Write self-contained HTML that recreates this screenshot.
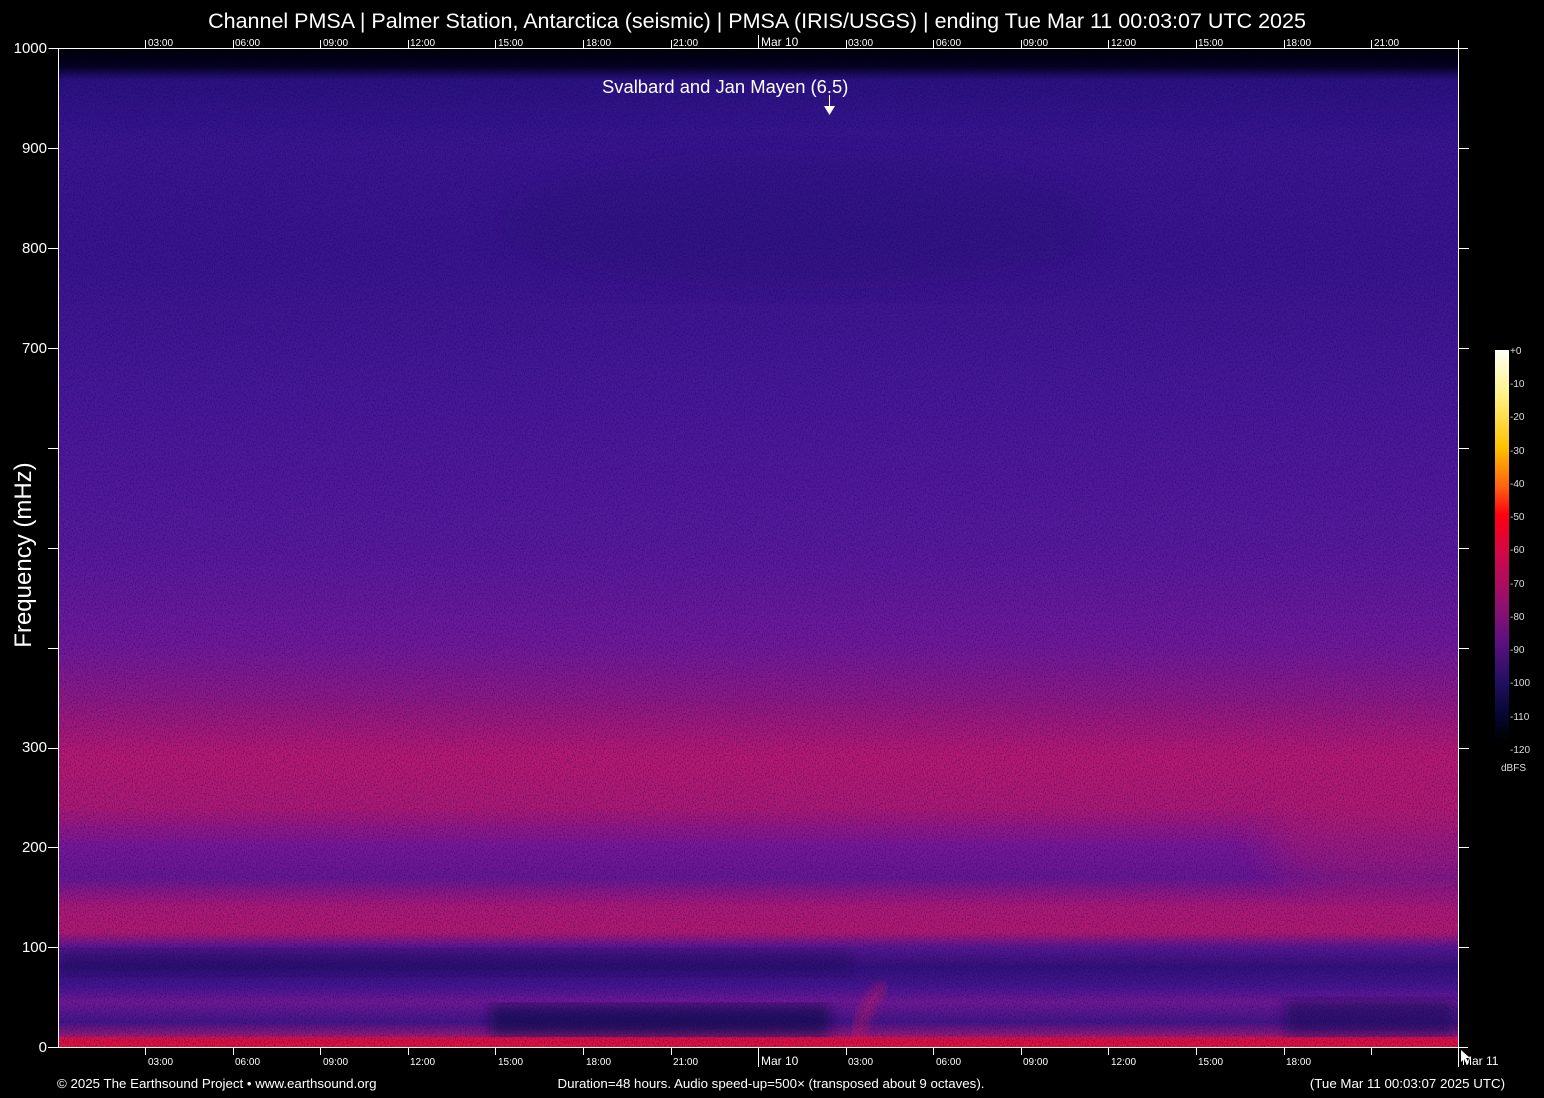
<!DOCTYPE html>
<html><head><meta charset="utf-8"><style>
html,body{margin:0;padding:0;background:#000;}
svg{display:block;font-family:"Liberation Sans",Arial,sans-serif;}
</style></head><body>
<svg width="1544" height="1098" viewBox="0 0 1544 1098" xmlns="http://www.w3.org/2000/svg">
<defs>
<linearGradient id="v" x1="0" y1="48" x2="0" y2="1047" gradientUnits="userSpaceOnUse">
<stop offset="0" stop-color="#000"/>
<stop offset="0.018" stop-color="#04021a"/>
<stop offset="0.032" stop-color="#2c1280"/>
<stop offset="0.1" stop-color="#3c1690"/>
<stop offset="0.2" stop-color="#3a158c"/>
<stop offset="0.35" stop-color="#4a1898"/>
<stop offset="0.5" stop-color="#5a1a9c"/>
<stop offset="0.6" stop-color="#741a98"/>
<stop offset="0.66" stop-color="#961a80"/>
<stop offset="0.71" stop-color="#bc1a70"/>
<stop offset="0.76" stop-color="#b01a74"/>
<stop offset="0.8" stop-color="#7a1896"/>
<stop offset="0.83" stop-color="#6a1894"/>
<stop offset="0.86" stop-color="#b01a74"/>
<stop offset="0.885" stop-color="#b41a70"/>
<stop offset="0.9" stop-color="#5c1890"/>
<stop offset="0.92" stop-color="#34127a"/>
<stop offset="0.94" stop-color="#481690"/>
<stop offset="0.955" stop-color="#721a94"/>
<stop offset="0.975" stop-color="#461688"/>
<stop offset="0.99" stop-color="#a01a78"/>
<stop offset="1" stop-color="#e41240"/>
</linearGradient>
<linearGradient id="cb" x1="0" y1="0" x2="0" y2="1">
<stop offset="0" stop-color="#fffff8"/>
<stop offset="0.12" stop-color="#fff080"/>
<stop offset="0.25" stop-color="#ffc000"/>
<stop offset="0.35" stop-color="#ff6010"/>
<stop offset="0.42" stop-color="#ff0010"/>
<stop offset="0.52" stop-color="#d00848"/>
<stop offset="0.65" stop-color="#901070"/>
<stop offset="0.75" stop-color="#5a1080"/>
<stop offset="0.85" stop-color="#201060"/>
<stop offset="0.93" stop-color="#060630"/>
<stop offset="1" stop-color="#000"/>
</linearGradient>
<filter id="n" x="0" y="0" width="100%" height="100%">
<feTurbulence type="fractalNoise" baseFrequency="0.9 0.6" numOctaves="2" seed="3"/>
<feColorMatrix type="matrix" values="0 0 0 0 0  0 0 0 0 0  0 0 0 0 0.1  2.2 0 0 0 -0.95"/>
</filter>
<filter id="b"><feGaussianBlur stdDeviation="6"/></filter>
<filter id="b2"><feGaussianBlur stdDeviation="20"/></filter>
<clipPath id="pc"><rect x="59" y="49" width="1399" height="998"/></clipPath>
</defs>
<g clip-path="url(#pc)">
<rect x="59" y="49" width="1399" height="998" fill="url(#v)"/>
<ellipse cx="1400" cy="840" rx="140" ry="50" fill="#c01a68" opacity="0.5" filter="url(#b2)"/>
<ellipse cx="800" cy="220" rx="300" ry="70" fill="#1a0a60" opacity="0.2" filter="url(#b2)"/>
<rect x="490" y="1005" width="340" height="30" fill="#180a50" opacity="0.75" filter="url(#b)"/>
<rect x="1285" y="1000" width="170" height="35" fill="#200c5c" opacity="0.65" filter="url(#b)"/>
<rect x="60" y="950" width="790" height="25" fill="#200c5c" opacity="0.4" filter="url(#b)"/>
<path d="M855 1045 Q865 1000 885 985" stroke="#e01a58" stroke-width="8" fill="none" opacity="0.7" filter="url(#b)"/>
<rect x="59" y="1037" width="1399" height="10" fill="#f01030" opacity="0.7"/>
<rect x="59" y="49" width="1399" height="998" filter="url(#n)" opacity="0.5"/>
</g>
<g stroke="#fff" stroke-width="1" fill="none">
<path d="M48.5 48.5H1468M58.5 48.5V1047.5M1458.5 40V1047.5M48 1047.5H1468"/>
<path d="M48 148.5h10M48 248.5h10M48 348.5h10M48 448.5h10M48 548.5h10M48 648.5h10M48 748.5h10M48 847.5h10M48 947.5h10"/>
<path d="M1459 148.5h10M1459 248.5h10M1459 348.5h10M1459 448.5h10M1459 548.5h10M1459 648.5h10M1459 748.5h10M1459 847.5h10M1459 947.5h10"/>
<path d="M145.5 40V48M233.5 40V48M320.5 40V48M408.5 40V48M495.5 40V48M583.5 40V48M671.5 40V48M758.5 35V48M846.5 40V48M933.5 40V48M1021.5 40V48M1108.5 40V48M1196.5 40V48M1284.5 40V48M1371.5 40V48"/>
<path d="M145.5 1047V1055M233.5 1047V1055M320.5 1047V1055M408.5 1047V1055M495.5 1047V1055M583.5 1047V1055M671.5 1047V1055M758.5 1047V1067M846.5 1047V1055M933.5 1047V1055M1021.5 1047V1055M1108.5 1047V1055M1196.5 1047V1055M1284.5 1047V1055M1371.5 1047V1055M1458.5 1047V1067"/>
</g>
<g fill="#fff" font-size="10">
<text x="148" y="46">03:00</text><text x="235" y="46">06:00</text><text x="323" y="46">09:00</text><text x="410" y="46">12:00</text><text x="498" y="46">15:00</text><text x="586" y="46">18:00</text><text x="673" y="46">21:00</text><text x="848" y="46">03:00</text><text x="936" y="46">06:00</text><text x="1023" y="46">09:00</text><text x="1111" y="46">12:00</text><text x="1198" y="46">15:00</text><text x="1286" y="46">18:00</text><text x="1374" y="46">21:00</text>
<text x="148" y="1065">03:00</text><text x="235" y="1065">06:00</text><text x="323" y="1065">09:00</text><text x="410" y="1065">12:00</text><text x="498" y="1065">15:00</text><text x="586" y="1065">18:00</text><text x="673" y="1065">21:00</text><text x="848" y="1065">03:00</text><text x="936" y="1065">06:00</text><text x="1023" y="1065">09:00</text><text x="1111" y="1065">12:00</text><text x="1198" y="1065">15:00</text><text x="1286" y="1065">18:00</text>
</g>
<g fill="#fff" font-size="12">
<text x="761" y="46">Mar 10</text><text x="761" y="1065">Mar 10</text><text x="1462" y="1065">Mar 11</text>
</g>
<g fill="#fff" font-size="15" text-anchor="end">
<text x="47" y="53">1000</text><text x="47" y="153">900</text><text x="47" y="253">800</text><text x="47" y="353">700</text><text x="47" y="752">300</text><text x="47" y="852">200</text><text x="47" y="952">100</text><text x="47" y="1052">0</text>
</g>
<text x="757" y="28" fill="#fff" font-size="21.5" text-anchor="middle">Channel PMSA | Palmer Station, Antarctica (seismic) | PMSA (IRIS/USGS) | ending Tue Mar 11 00:03:07 UTC 2025</text>
<text transform="translate(31 555) rotate(-90)" fill="#fff" font-size="24" text-anchor="middle">Frequency (mHz)</text>
<text x="602" y="93" fill="#fff" font-size="18.4">Svalbard and Jan Mayen (6.5)</text>
<path d="M829.5 95V107" stroke="#fff"/><path d="M824 106h11l-5.5 9z" fill="#fff"/>
<path d="M1461 1050l0 12 3-3 3 5 2-1-3-5 4 0z" fill="#fff"/>
<rect x="1495" y="350" width="14" height="392" fill="url(#cb)"/>
<g fill="#ddd" font-size="10">
<text x="1510" y="354">+0</text><text x="1510" y="387">-10</text><text x="1510" y="420">-20</text><text x="1510" y="454">-30</text><text x="1510" y="487">-40</text><text x="1510" y="520">-50</text><text x="1510" y="553">-60</text><text x="1510" y="587">-70</text><text x="1510" y="620">-80</text><text x="1510" y="653">-90</text><text x="1510" y="686">-100</text><text x="1510" y="720">-110</text><text x="1510" y="753">-120</text><text x="1501" y="771">dBFS</text>
</g>
<g fill="#fff" font-size="13.3">
<text x="57" y="1088">© 2025 The Earthsound Project • www.earthsound.org</text>
<text x="771" y="1088" text-anchor="middle">Duration=48 hours. Audio speed-up=500× (transposed about 9 octaves).</text>
<text x="1505" y="1088" text-anchor="end">(Tue Mar 11 00:03:07 2025 UTC)</text>
</g>
</svg>
</body></html>
